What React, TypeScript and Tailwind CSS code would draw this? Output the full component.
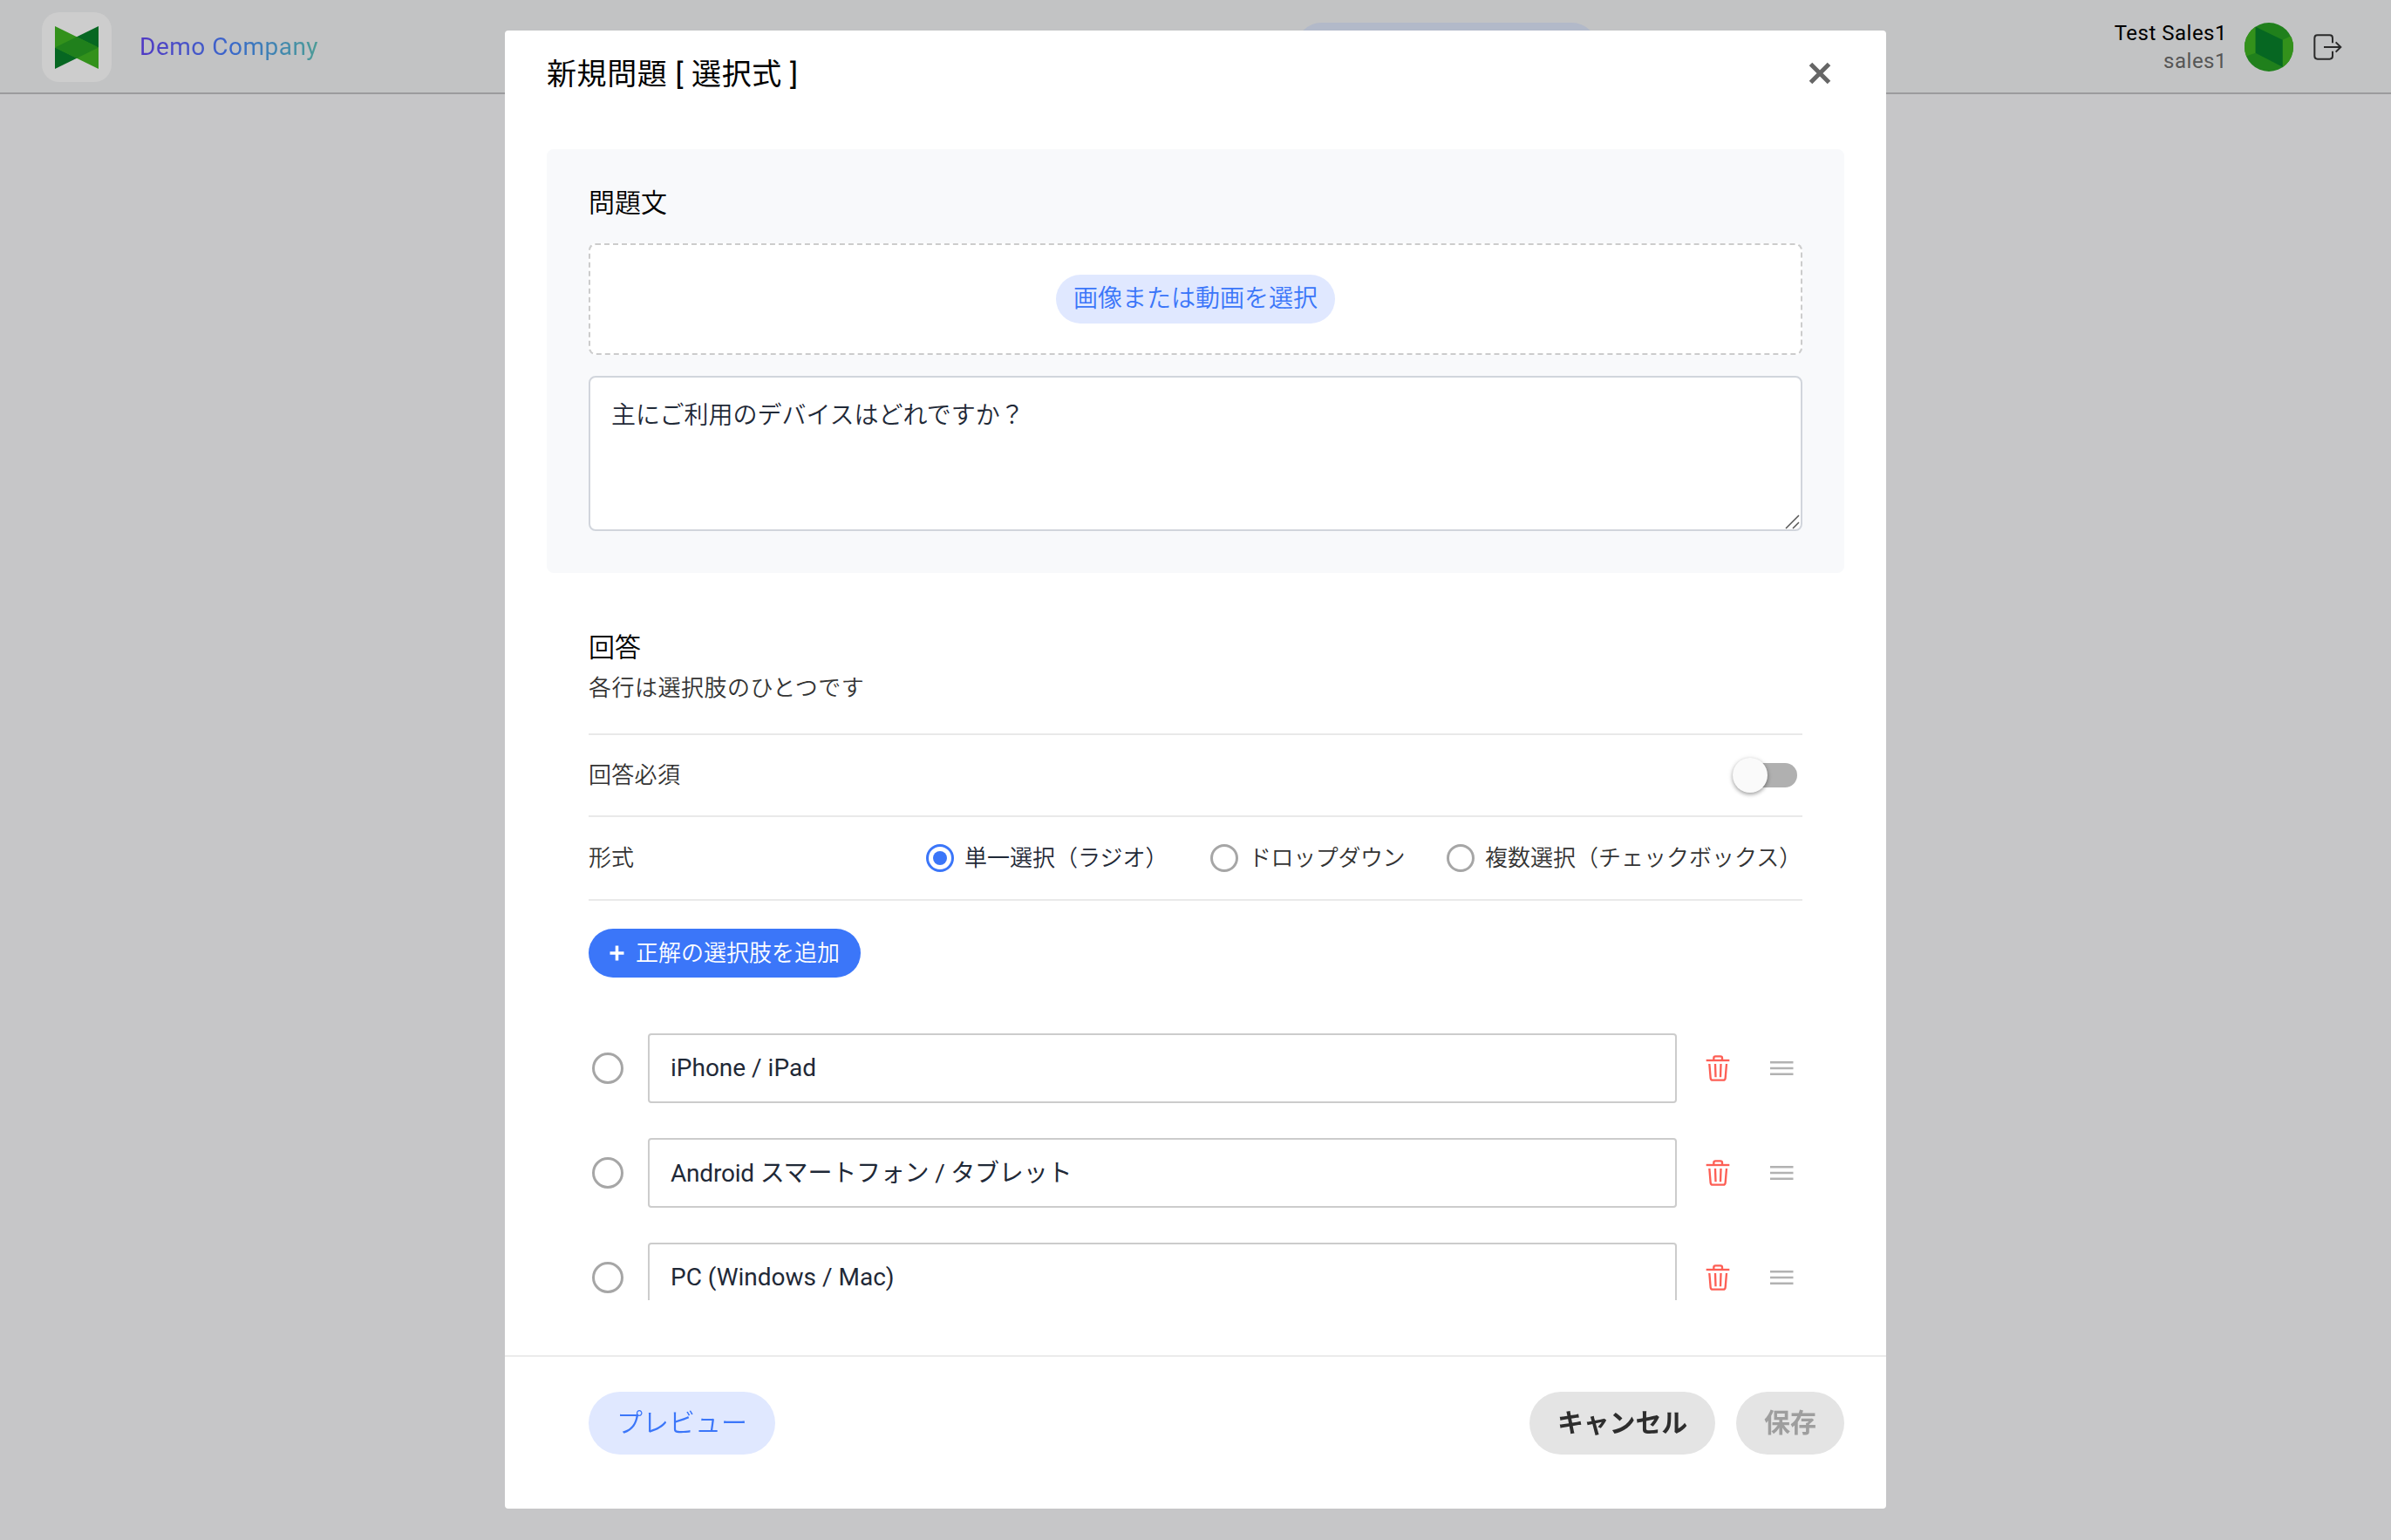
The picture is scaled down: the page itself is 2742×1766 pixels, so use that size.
// App.tsx — Diálogo de nueva pregunta (tipo selección) sobre la cabecera de la aplicación

import { useState } from "react";
import clsx from "clsx";

type AnswerFormat = "radio" | "dropdown" | "checkbox";

const FORMATS: { value: AnswerFormat; label: string; width: string }[] = [
  { value: "radio",    label: "単一選択（ラジオ）",           width: "w-[234px]" },
  { value: "dropdown", label: "ドロップダウン",               width: "w-[179px] tracking-[-0.4px]" },
  { value: "checkbox", label: "複数選択（チェックボックス）", width: "w-[364px]" },
];

const INITIAL_CHOICES = ["iPhone / iPad", "Android スマートフォン / タブレット", "PC (Windows / Mac)"];

const hasKana = (text: string) => /[\u3040-\u30ff]/.test(text);

function CompanyLogo() {
  return (
    <svg width="50" height="49" viewBox="0 0 50 49" preserveAspectRatio="none">
      <path d="M50 0V24.5L0 49V24.5Z" fill="#066722" />
      <path d="M0 0L50 24.5V49L0 24.5Z" fill="#33911b" />
      <path d="M0 24.5L25 12.25L50 24.5L25 36.75Z" fill="#20801c" />
    </svg>
  );
}

function Avatar() {
  return (
    <svg className="rounded-full" width="56" height="56" viewBox="0 0 168 168">
      <path d="M0 0H168V168H0Z" fill="#20801c" />
      <path d="M0 0H38V104L0 117Z" fill="#33911b" />
      <path d="M131 59L168 42V168H131Z" fill="#33911b" />
      <path d="M38 14L131 59V152L38 104Z" fill="#066722" />
    </svg>
  );
}

function LogoutIcon() {
  return (
    <svg width="34" height="32" viewBox="0 0 102 96" fill="none" stroke="#2a2a2a" strokeWidth="6">
      <path d="M69 34V17Q69 7 59 7H17Q7 7 7 17V79Q7 89 17 89H59Q69 89 69 79V62" />
      <path d="M39 48H96M80 31L97 48L80 65" />
    </svg>
  );
}

function CloseIcon() {
  return (
    <svg width="26" height="26" viewBox="0 0 26 26" fill="none" stroke="#666" strokeWidth="5">
      <path d="M2.5 2.5L23.5 23.5M23.5 2.5L2.5 23.5" />
    </svg>
  );
}

function TrashIcon() {
  return (
    <svg width="28" height="32" viewBox="0 0 84 96" fill="none" stroke="#fd5f55" strokeWidth="7">
      <path d="M2 21H82" />
      <path d="M28 20V13Q28 7 34 7H51Q57 7 57 13V20" />
      <path d="M13 33L17 82Q18 89 24 89H61Q67 89 68 82L72 33" />
      <path d="M33 33L34.5 79M52.5 33L51 79" />
    </svg>
  );
}

function DragHandle() {
  return (
    <svg width="28" height="18" viewBox="0 0 28 18" fill="none" stroke="#b2b2b2" strokeWidth="2.4">
      <path d="M1 2.3H27.5M1 9H27.5M1 15.7H27.5" />
    </svg>
  );
}

export default function App() {
  const [format, setFormat] = useState<AnswerFormat>("radio");
  const [required, setRequired] = useState(false);
  const [question, setQuestion] = useState("主にご利用のデバイスはどれですか？");
  const [choices, setChoices] = useState(INITIAL_CHOICES);

  const updateChoice = (index: number, value: string) => {
    setChoices(choices.map((c, i) => (i === index ? value : c)));
  };

  return (
    <div className="h-[1766px] w-[2742px] overflow-hidden bg-[#c6c6c8] font-['Roboto','Noto_Sans_CJK_JP',sans-serif] text-black">
      {/* Cabecera */}
      <header className="flex h-[108px] items-center border-b-2 border-[#9b9b9d] bg-[#c2c3c4] pt-[2px] pr-14 pl-12">
        <div className="flex h-20 w-20 items-center justify-center rounded-[20px] bg-[#cdcdcd]">
          <CompanyLogo />
        </div>
        <span className="ml-8 bg-linear-to-r from-[#5038c4] via-[#3a66cb] to-[#4d9c96] bg-clip-text text-[28px] leading-10 tracking-[0.5px] text-transparent">
          Demo Company
        </span>
        <div className="ml-auto h-14 w-[344px] rounded-full bg-[#b2b9c9]" />
        <div className="flex w-[855px] items-center justify-end">
          <div className="text-right text-[24px] leading-8 tracking-[0.5px]">
            <p>Test Sales1</p>
            <p className="text-[#565656]">sales1</p>
          </div>
          <div className="mr-[22px] ml-5">
            <Avatar />
          </div>
          <LogoutIcon />
        </div>
      </header>

      {/* Diálogo */}
      <div className="fixed inset-0 flex justify-center pt-[35px]">
        <div className="flex h-[1695px] w-[1584px] flex-col rounded-[4px] bg-white">
          <div className="flex h-[98px] shrink-0 items-center justify-between pr-[63px] pl-12">
            <h2 className="pt-[2px] text-[34px] leading-[48px] font-[380] tracking-[0.6px]">新規問題 [ 選択式 ]</h2>
            <button type="button">
              <CloseIcon />
            </button>
          </div>

          <div className="h-[1358px] shrink-0 overflow-hidden px-12 pt-[38px]">
            {/* Enunciado */}
            <section className="rounded-[8px] bg-[#f8f9fb] px-12 pt-[41px] pb-12">
              <h3 className="mb-[25px] text-[30px] leading-[42px] font-[350]">問題文</h3>
              <div className="flex h-32 items-center justify-center rounded-[8px] border-2 border-dashed border-[#ccc] bg-white">
                <button type="button" className="h-14 rounded-full bg-[#e0e8ff] px-5 text-[28px] leading-[54px] font-[350] text-[#3b76f9]">
                  画像または動画を選択
                </button>
              </div>
              <div className="relative mt-6 h-[178px]">
                <textarea
                  value={question}
                  onChange={(e) => setQuestion(e.target.value)}
                  className="h-full w-full resize-none rounded-[8px] border-2 border-[#d1d5dc] bg-white px-6 py-[23px] text-[28px] leading-[42px] font-[350] text-[#1f2937] outline-none"
                />
                <svg className="absolute right-[3px] bottom-[2px]" width="17" height="17" viewBox="0 0 17 17" fill="none" stroke="#555" strokeWidth="1.5">
                  <path d="M1 16L16 1M9 16L16 9" />
                </svg>
              </div>
            </section>

            {/* Respuestas */}
            <section className="px-12 pt-[65px]">
              <h3 className="text-[30px] leading-[42px] font-[350]">回答</h3>
              <p className="mt-[7px] mb-[34px] text-[26px] leading-9 font-[350] tracking-[0.5px] text-[#333]">各行は選択肢のひとつです</p>

              <div className="flex h-[94px] items-center justify-between border-t-2 border-[#e9e9e9] text-[26px] font-[350] text-[#333]">
                <span className="tracking-[0.3px]">回答必須</span>
                <button
                  type="button"
                  onClick={() => setRequired(!required)}
                  className="mr-[6px] flex h-7 w-[68px] items-center rounded-full bg-[#b0b0b0]"
                >
                  <span className="-ml-[6px] h-10 w-10 shrink-0 rounded-full bg-[#fafafa] shadow-[0_2px_4px_rgba(0,0,0,0.3),0_1px_6px_rgba(0,0,0,0.12)]" />
                </button>
              </div>

              <div className="flex h-24 items-center justify-between border-t-2 border-[#e9e9e9] text-[26px] font-[350] text-[#333]">
                <span>形式</span>
                <div className="flex gap-12">
                  {FORMATS.map((f) => (
                    <label key={f.value} className="flex items-center gap-3" onClick={() => setFormat(f.value)}>
                      {format === f.value ? (
                        <span className="flex h-8 w-8 items-center justify-center rounded-full border-3 border-[#3b76f9]">
                          <span className="h-4 w-4 rounded-full bg-[#3b76f9]" />
                        </span>
                      ) : (
                        <span className="h-8 w-8 rounded-full border-3 border-[#a6a6a6]" />
                      )}
                      <span className={clsx("whitespace-nowrap", f.width, format === f.value && "text-[#1f2937]")}>{f.label}</span>
                    </label>
                  ))}
                </div>
              </div>

              <div className="border-t-2 border-[#e9e9e9] pt-8">
                <button type="button" className="flex h-14 items-center gap-[13px] rounded-full bg-[#3b76f9] px-6 text-[26px] leading-[54px] font-[350] text-white">
                  <svg width="17" height="18" viewBox="0 0 17 18" stroke="currentColor" strokeWidth="3.6">
                    <path d="M0.5 9H16.5M8.5 0.5V17.5" />
                  </svg>
                  正解の選択肢を追加
                </button>
              </div>

              <div className="mt-16 flex flex-col gap-10">
                {choices.map((choice, i) => (
                  <div key={i} className="flex h-20 items-center">
                    <span className="ml-1 h-9 w-9 shrink-0 rounded-full border-3 border-[#a6a6a6]" />
                    <input
                      value={choice}
                      onChange={(e) => updateChoice(i, e.target.value)}
                      className={clsx(
                        "ml-7 h-20 w-[1180px] rounded-[4px] border-2 border-[#ccc] bg-white px-6 text-[28px] text-[#1f2937] outline-none",
                        hasKana(choice) ? "pb-1 font-[380] tracking-[-0.2px]" : "pb-[2px]",
                      )}
                    />
                    <button type="button" className="ml-[33px]">
                      <TrashIcon />
                    </button>
                    <span className="ml-[45px]">
                      <DragHandle />
                    </span>
                  </div>
                ))}
              </div>
            </section>
          </div>

          {/* Acciones */}
          <footer className="mt-[63px] flex h-[176px] items-start border-t-2 border-[#ebebeb] pt-10 pr-12 pl-24 text-[30px] leading-[70px]">
            <button type="button" className="h-[72px] rounded-full bg-[#e0e8ff] px-8 font-[350] text-[#3b76f9]">
              プレビュー
            </button>
            <button type="button" className="mr-6 ml-auto h-[72px] rounded-full bg-[#e4e4e4] px-8 font-bold tracking-[-0.2px] text-[#2d2d2d]">
              キャンセル
            </button>
            <button type="button" disabled className="h-[72px] rounded-full bg-[#e4e4e4] px-8 font-bold text-[#9e9e9e]">
              保存
            </button>
          </footer>
        </div>
      </div>
    </div>
  );
}
